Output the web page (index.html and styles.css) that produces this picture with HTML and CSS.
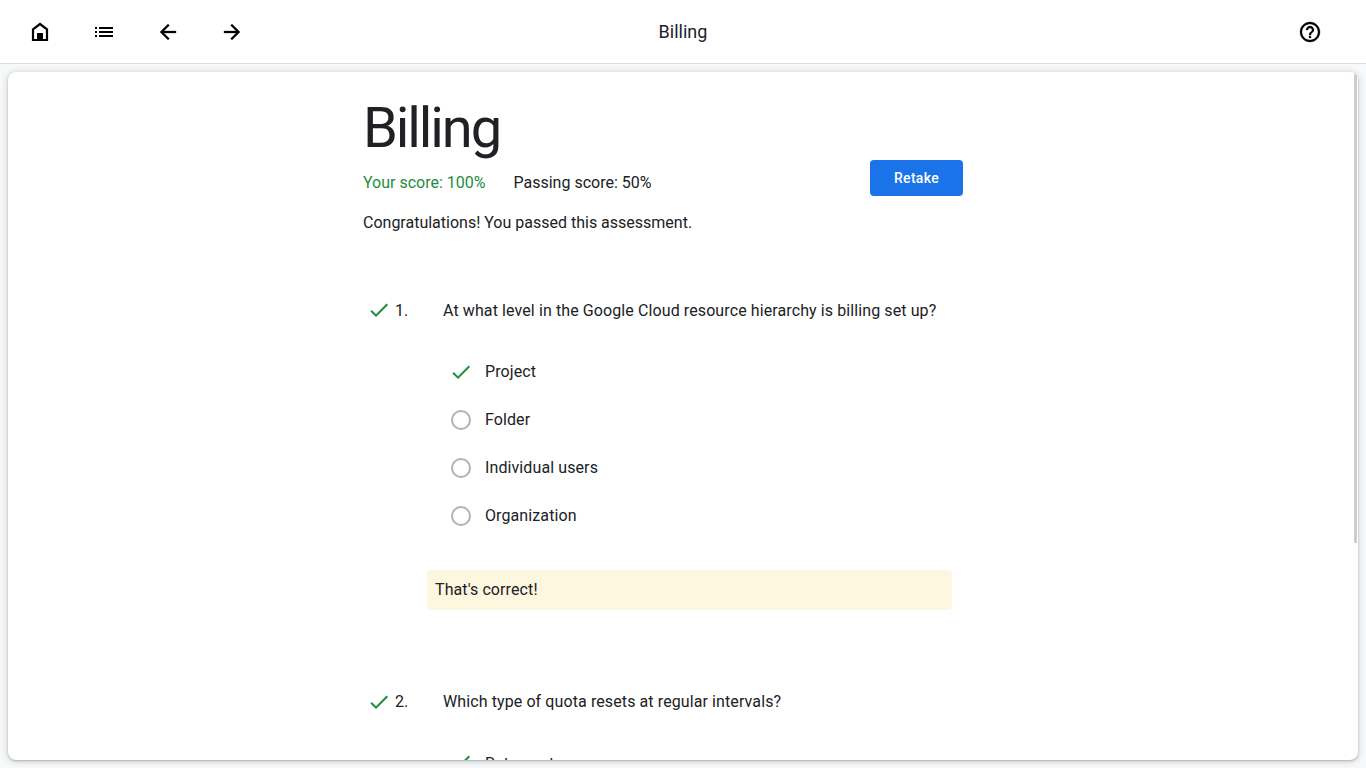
FILE: index.html
```html
<!DOCTYPE html>
<html lang="en">
<head>
<meta charset="utf-8">
<title>Billing</title>
<link rel="stylesheet" href="styles.css">
</head>
<body>
<header class="toolbar">
  <nav class="nav">
    <a class="nav-btn" aria-label="Home"><svg class="icon" viewBox="0 0 24 24"><path d="M5 9.300 12 4l7 5.300V20H5z" fill="none" stroke="#000" stroke-width="2.200"/><path d="M9 13h6v7H9z"/></svg></a>
    <a class="nav-btn" aria-label="Contents"><svg class="icon" viewBox="0 0 24 24"><path d="M3 7h2v2H3zm4 0h14v2H7zm-4 4h2v2H3zm4 0h14v2H7zm-4 4h2v2H3zm4 0h14v2H7z"/></svg></a>
    <a class="nav-btn" aria-label="Previous"><svg class="icon bold" viewBox="0 0 24 24"><path d="M20 11H7.830l5.590-5.590L12 4l-8 8 8 8 1.410-1.410L7.830 13H20v-2z"/></svg></a>
    <a class="nav-btn" aria-label="Next"><svg class="icon bold" viewBox="0 0 24 24"><path d="M12 4l-1.410 1.410L16.170 11H4v2h12.170l-5.580 5.590L12 20l8-8z"/></svg></a>
  </nav>
  <div class="toolbar-title">Billing</div>
  <div class="help"><a class="nav-btn" aria-label="Help"><svg class="icon bold" viewBox="0 0 24 24"><path d="M11 18h2v-2h-2v2zm1-16C6.480 2 2 6.480 2 12s4.480 10 10 10 10-4.480 10-10S17.520 2 12 2zm0 18c-4.410 0-8-3.590-8-8s3.590-8 8-8 8 3.590 8 8-3.590 8-8 8zm0-14c-2.210 0-4 1.790-4 4h2c0-1.100.9-2 2-2s2 .9 2 2c0 2-3 1.750-3 5h2c0-2.250 3-2.500 3-5 0-2.210-1.790-4-4-4z"/></svg></a></div>
</header>
<main class="stage">
  <div class="card">
    <div class="scroll-thumb"></div>
    <article class="content">
      <h1 class="heading">Billing</h1>
      <div class="score-row">
        <div class="scores"><span class="score">Your score: 100%</span><span>Passing score: 50%</span></div>
        <button class="retake">Retake</button>
      </div>
      <p class="message">Congratulations! You passed this assessment.</p>
      <section class="question">
        <div class="prompt"><svg class="icon check raised" viewBox="0 0 24 24"><path d="M9 16.170 4.830 12l-1.420 1.410L9 19 21 7l-1.410-1.410z"/></svg><span class="number">1.</span><span>At what level in the Google Cloud resource hierarchy is billing set up?</span></div>
        <ul class="options">
          <li class="option"><svg class="icon check" viewBox="0 0 24 24"><path d="M9 16.170 4.830 12l-1.420 1.410L9 19 21 7l-1.410-1.410z"/></svg>Project</li>
          <li class="option"><span class="radio"></span>Folder</li>
          <li class="option"><span class="radio"></span>Individual users</li>
          <li class="option"><span class="radio"></span>Organization</li>
        </ul>
        <div class="feedback">That's correct!</div>
      </section>
      <section class="question">
        <div class="prompt"><svg class="icon check" viewBox="0 0 24 24"><path d="M9 16.170 4.830 12l-1.420 1.410L9 19 21 7l-1.410-1.410z"/></svg><span class="number">2.</span><span>Which type of quota resets at regular intervals?</span></div>
        <ul class="options">
          <li class="option"><svg class="icon check raised" viewBox="0 0 24 24"><path d="M9 16.170 4.830 12l-1.420 1.410L9 19 21 7l-1.410-1.410z"/></svg>Rate quota</li>
        </ul>
      </section>
    </article>
  </div>
</main>
</body>
</html>
```
FILE: styles.css
```css
* { box-sizing: border-box; }
body {
  margin: 0;
  height: 100vh;
  display: flex;
  flex-direction: column;
  overflow: hidden;
  background: #f8f9fa;
  color: #202124;
  font: 16px/24px Roboto, sans-serif;
}
.toolbar {
  flex: none;
  height: 64px;
  display: grid;
  grid-template-columns: 1fr auto 1fr;
  align-items: center;
  padding: 0 32px 0 16px;
  background: #fff;
  border-bottom: 1px solid #dadce0;
}
.nav { display: flex; gap: 16px; }
.nav-btn { width: 48px; height: 48px; display: grid; place-items: center; }
.help { display: flex; justify-content: flex-end; }
.icon { display: block; flex: none; width: 24px; height: 24px; }
.bold { stroke: #000; stroke-width: .3; }
.toolbar-title {
  font: 18px/24px Roboto, sans-serif;
  margin-left: 16px;
}
.stage { flex: 1; min-height: 0; display: grid; padding: 8px; }
.card {
  position: relative;
  height: 100%;
  overflow: hidden;
  background: #fff;
  border-radius: 8px;
  box-shadow: 0 1px 2px rgba(60,64,67,.3), 0 1px 6px 2px rgba(60,64,67,.15);
}
.scroll-thumb {
  position: absolute;
  top: 2px;
  right: 1px;
  width: 3px;
  height: 469px;
  border-radius: 1px;
  background: #ccc;
}
.content { width: 600px; margin-left: 355px; padding-top: 24px; }
.heading {
  margin: 0;
  font: 400 56px/64px Roboto, sans-serif;
  letter-spacing: -2.1px;
}
.score-row { display: flex; justify-content: space-between; align-items: flex-start; height: 51px; }
.scores { display: flex; gap: 28px; padding-top: 11px; }
.score { color: #1e8e3e; }
.retake {
  width: 93px;
  height: 36px;
  padding: 0;
  border: 0;
  border-radius: 4px;
  background: #1a73e8;
  color: #fff;
  font: 500 14px/36px Roboto, sans-serif;
  letter-spacing: .3px;
}
.message { margin: 0; }
.question { margin-top: 64px; letter-spacing: .1px; }
.question + .question { margin-top: 80px; }
.prompt { display: flex; align-items: center; padding-left: 4px; }
.number { width: 48px; margin-left: 4px; letter-spacing: 0; }
.check { fill: #1e8e3e; }
.raised { margin-bottom: 2px; margin-top: -2px; }
.prompt .raised { margin: -1px 0 1px; }
.options { list-style: none; margin: 25px 0 0; padding: 0 0 0 86px; }
.question + .question .options { margin-top: 26px; }
.option { display: flex; align-items: center; gap: 12px; height: 48px; }
.radio {
  flex: none;
  width: 20px;
  height: 20px;
  margin: 0 2px;
  border: 2px solid #b1b1b1;
  border-radius: 50%;
}
.feedback {
  width: 525px;
  height: 40px;
  margin: 30px 0 0 64px;
  padding: 8px;
  border-radius: 4px;
  background: #fef7e0;
}
```
